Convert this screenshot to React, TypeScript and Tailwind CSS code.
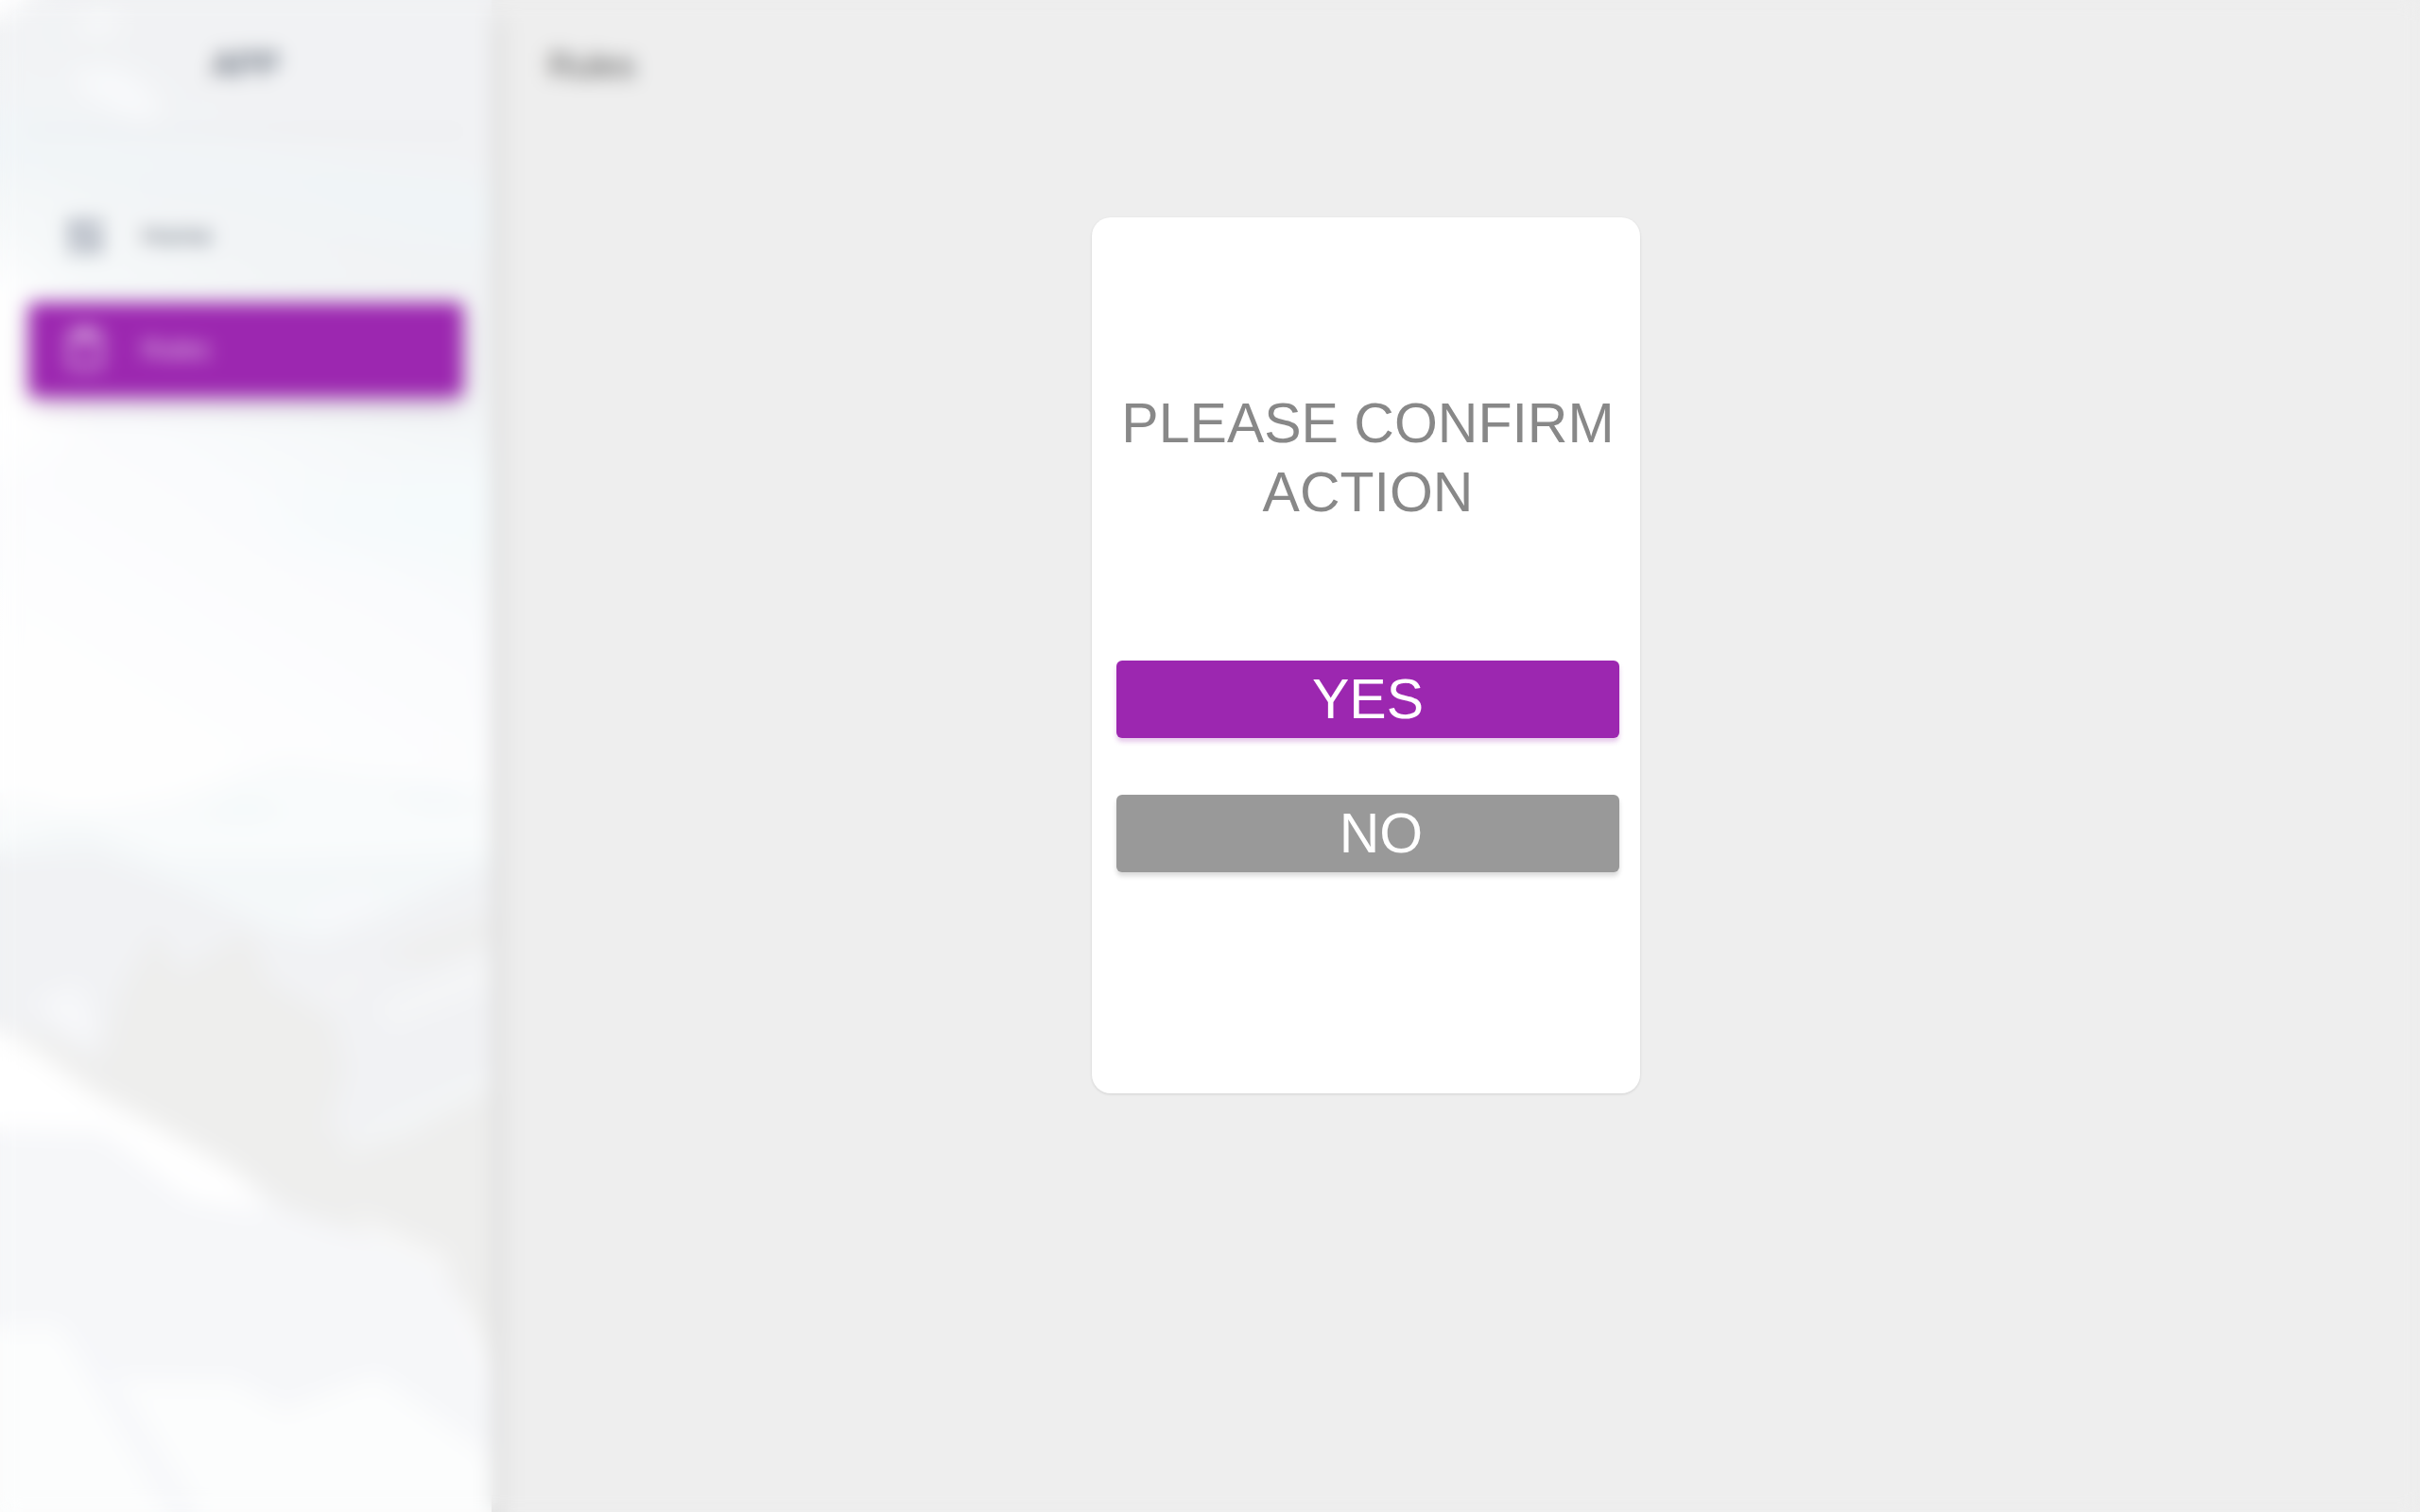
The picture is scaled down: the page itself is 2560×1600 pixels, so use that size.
import { MdContentPaste, MdDashboard } from "react-icons/md";

function Scenery() {
  return (
    <svg
      aria-hidden="true"
      className="absolute inset-0 h-full w-full"
      viewBox="0 0 520 1600"
      preserveAspectRatio="none"
    >
      <defs>
        <linearGradient id="sky" x1="0.2" y1="0" x2="0" y2="1">
          <stop offset="0" stopColor="#f1f2f4" />
          <stop offset="0.1" stopColor="#f2f4f6" />
          <stop offset="0.17" stopColor="#f5f8f9" />
          <stop offset="0.26" stopColor="#fafbfd" />
          <stop offset="0.45" stopColor="#fefefe" />
        </linearGradient>
        <filter id="soft" x="-20%" y="-20%" width="140%" height="140%">
          <feGaussianBlur stdDeviation="9" />
        </filter>
        <filter id="haze" x="-50%" y="-50%" width="200%" height="200%">
          <feGaussianBlur stdDeviation="26" />
        </filter>
      </defs>
      <rect width="520" height="1600" fill="url(#sky)" />
      <g filter="url(#haze)">
        <path d="M-60 230 L60 330 L70 460 L-60 520 Z" fill="#ffffff" />
        <path d="M270 545 L540 480 L540 590 L330 570 Z" fill="#f5fafc" />
        <path d="M-40 120 L300 170 L540 200 L540 270 L240 200 L-40 170 Z" fill="#f0f5f8" />
      </g>
      <g filter="url(#soft)">
        <path d="M-30 -30 L60 -20 L0 22 L-30 30 Z" fill="#ffffff" />
        <path d="M75 25 L110 12 L135 25 L100 38 Z" fill="#f8f9fa" />
        <path d="M75 75 L125 72 L165 100 L165 130 L135 122 L85 98 Z" fill="#f8f9fb" />
        <path d="M-20 846 L40 848 L75 862 L180 845 L300 802 L380 815 L540 836 L540 1100 L-20 1100 Z" fill="#f9fbfc" />
        <path d="M205 865 L260 838 L310 860 L260 872 Z" fill="#f5f9fb" />
        <path d="M400 840 L460 835 L520 850 L460 858 Z" fill="#f4f8fa" />
        <path d="M-20 900 L40 880 L80 868 L180 908 L300 908 L540 900 L540 1100 L-20 1100 Z" fill="#f4f8f9" />
        <path d="M-20 908 L100 900 L200 940 L290 985 L340 995 L410 968 L540 905 L540 1400 L-20 1100 Z" fill="#f1f2f4" />
        <path d="M315 965 L380 940 L410 960 L350 985 Z" fill="#f7f8fa" />
        <path d="M35 1060 L85 1042 L105 1105 L75 1098 Z" fill="#f7f8fa" />
        <path d="M0 1082 L60 1098 L105 1125 L130 1045 L165 985 L190 1030 L262 985 L285 1040 L350 1075 L365 1130 L345 1200 L430 1205 L540 1130 L540 1480 L470 1340 L300 1290 L100 1175 Z" fill="#eeeeed" />
        <path d="M400 1010 L540 960 L540 990 L450 1020 Z" fill="#efefee" />
        <path d="M320 1070 L385 1020 L375 1050 Z" fill="#f4f4f4" />
        <path d="M400 1060 L540 1000 L540 1040 L410 1090 Z" fill="#f4f5f6" />
        <path d="M370 1205 L410 1180 L540 1120 L540 1145 L430 1200 L360 1225 Z" fill="#f3f4f5" />
        <path d="M-20 1078 L36 1115 L100 1160 L180 1203 L250 1240 L300 1278 L350 1296 L430 1318 L475 1345 L490 1400 L540 1500 L540 1640 L-20 1640 Z" fill="#f6f7f9" />
        <path d="M-20 1078 L36 1110 L100 1157 L180 1200 L250 1240 L285 1282 L200 1268 L110 1198 L-20 1194 Z" fill="#ffffff" />
        <path d="M370 1280 L430 1310 L475 1330 L470 1350 L410 1325 Z" fill="#f8f8f8" />
        <path d="M-20 1405 L60 1402 L100 1440 L130 1460 L250 1462 L300 1492 L370 1465 L400 1455 L540 1555 L540 1640 L-20 1640 Z" fill="#fcfdfd" />
        <path d="M62 1400 L110 1440 L215 1610 L185 1610 Z" fill="#f6f7fa" />
      </g>
    </svg>
  );
}

const navItems = [
  { label: "Home", Icon: MdDashboard, active: false },
  { label: "Rules", Icon: MdContentPaste, active: true },
];

function Sidebar() {
  return (
    <aside className="relative w-[520px] shrink-0 bg-white shadow-[0_20px_24px_4px_rgba(0,0,0,0.12)]">
      <Scenery />
      <div className="relative">
        <div className="mx-[30px] flex h-[140px] items-center justify-center border-b-2 border-[#e4e5e7]">
          <a href="#app" className="text-[36px] leading-[40px] text-[#3c4858]">
            APP
          </a>
        </div>
        <nav className="mt-[60px] flex flex-col gap-5 px-[30px]">
          {navItems.map(({ label, Icon, active }) => (
            <a
              key={label}
              href={"#" + label.toLowerCase()}
              aria-current={active ? "page" : undefined}
              className={
                active
                  ? "flex h-[100px] items-center gap-[30px] rounded-md bg-[#9c27b0] px-[30px] text-[28px] text-white/80 shadow-[0_8px_24px_rgba(0,0,0,0.12),0_14px_16px_-10px_rgba(156,39,176,0.3)]"
                  : "flex h-[100px] items-center gap-[30px] rounded-md px-[30px] text-[28px] text-[#3c4858]/80"
              }
            >
              <span className={active ? "flex w-[60px] justify-center" : "flex w-[60px] justify-center text-[#a9afbb]"}>
                <Icon className="size-12" aria-hidden="true" />
              </span>
              {label}
            </a>
          ))}
        </nav>
      </div>
    </aside>
  );
}

function ConfirmDialog() {
  return (
    <div className="fixed inset-0 flex items-start justify-center pt-[230px] pl-[330px] backdrop-blur-[10px]">
      <div
        role="dialog"
        aria-modal="true"
        aria-labelledby="confirm-title"
        className="w-[580px] rounded-[20px] bg-white pt-[182px] pr-[22px] pb-[234px] pl-[26px] shadow-[0_1px_3px_rgba(0,0,0,0.12)]"
      >
        <h2 id="confirm-title" className="text-center text-[59px] leading-[73px] text-[#888888]">
          PLEASE CONFIRM ACTION
        </h2>
        <div className="mt-[141px] flex flex-col gap-[60px] text-[59px] leading-[82px] text-white">
          <button
            type="button"
            className="h-[82px] rounded-md bg-[#9c27b0] shadow-[0_4px_5px_rgba(156,39,176,0.25)]"
          >
            YES
          </button>
          <button
            type="button"
            className="h-[82px] rounded-md bg-[#999999] pl-7 shadow-[0_4px_5px_rgba(0,0,0,0.15)]"
          >
            NO
          </button>
        </div>
      </div>
    </div>
  );
}

export default function App() {
  return (
    <div className="flex min-h-screen bg-[#eeeeee] font-['Liberation_Sans',Arial,sans-serif]">
      <Sidebar />
      <main className="flex-1 px-[60px] pt-12">
        <h1 className="text-[36px] leading-[44px] text-[#555555]">Rules</h1>
      </main>
      <ConfirmDialog />
    </div>
  );
}
